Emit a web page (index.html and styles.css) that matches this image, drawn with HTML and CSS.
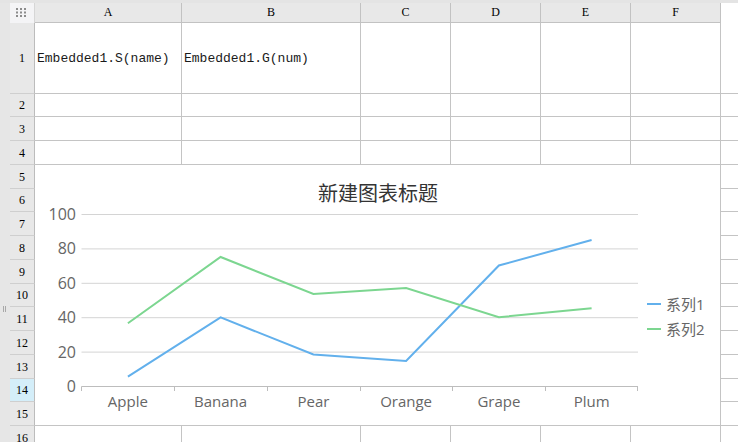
FILE: index.html
```html
<!DOCTYPE html>
<html>
<head>
<meta charset="utf-8">
<link rel="stylesheet" href="styles.css">
</head>
<body>
<div class="sheet">
  <div class="topstrip"></div>
  <div class="leftstrip"><span class="grip"></span></div>

  <div class="corner">
    <svg width="12" height="10" viewBox="0 0 12 10">
      <g fill="#8c8c8c">
        <rect x="0" y="0" width="2" height="2"/><rect x="4" y="0" width="2" height="2"/><rect x="8" y="0" width="2" height="2"/>
        <rect x="0" y="3.5" width="2" height="2"/><rect x="4" y="3.5" width="2" height="2"/><rect x="8" y="3.5" width="2" height="2"/>
        <rect x="0" y="7" width="2" height="2"/><rect x="4" y="7" width="2" height="2"/><rect x="8" y="7" width="2" height="2"/>
      </g>
    </svg>
  </div>
  <div class="h">A</div><div class="h">B</div><div class="h">C</div><div class="h">D</div><div class="h">E</div><div class="h">F</div><div class="hx"></div>

  <div class="rh">1</div><div class="c txt">Embedded1.S(name)</div><div class="c txt">Embedded1.G(num)</div><div class="c"></div><div class="c"></div><div class="c"></div><div class="c"></div><div class="x"></div>
  <div class="rh">2</div><div class="c"></div><div class="c"></div><div class="c"></div><div class="c"></div><div class="c"></div><div class="c"></div><div class="x"></div>
  <div class="rh">3</div><div class="c"></div><div class="c"></div><div class="c"></div><div class="c"></div><div class="c"></div><div class="c"></div><div class="x"></div>
  <div class="rh">4</div><div class="c"></div><div class="c"></div><div class="c"></div><div class="c"></div><div class="c"></div><div class="c"></div><div class="x"></div>

  <div class="chart">
    <svg width="685" height="260" viewBox="0 0 685 260">
      <text class="title" x="343" y="36" text-anchor="middle">新建图表标题</text>
      <g class="grid">
        <line x1="46.5" y1="49.5" x2="603" y2="49.5"/>
        <line x1="46.5" y1="83.9" x2="603" y2="83.9"/>
        <line x1="46.5" y1="118.3" x2="603" y2="118.3"/>
        <line x1="46.5" y1="152.7" x2="603" y2="152.7"/>
        <line x1="46.5" y1="187.1" x2="603" y2="187.1"/>
      </g>
      <g class="axis">
        <line x1="46.5" y1="221.5" x2="603" y2="221.5"/>
        <line x1="46.5" y1="221.5" x2="46.5" y2="226"/>
        <line x1="139.5" y1="221.5" x2="139.5" y2="226"/>
        <line x1="232.5" y1="221.5" x2="232.5" y2="226"/>
        <line x1="325.5" y1="221.5" x2="325.5" y2="226"/>
        <line x1="417.5" y1="221.5" x2="417.5" y2="226"/>
        <line x1="510.5" y1="221.5" x2="510.5" y2="226"/>
        <line x1="602.5" y1="221.5" x2="602.5" y2="226"/>
      </g>
      <g class="ylab" text-anchor="end">
        <text x="41" y="54.5">100</text>
        <text x="41" y="89">80</text>
        <text x="41" y="123.5">60</text>
        <text x="41" y="158">40</text>
        <text x="41" y="192.5">20</text>
        <text x="41" y="226.5">0</text>
      </g>
      <g class="xlab" text-anchor="middle">
        <text x="92.9" y="241.5">Apple</text>
        <text x="185.6" y="241.5">Banana</text>
        <text x="278.4" y="241.5">Pear</text>
        <text x="371.1" y="241.5">Orange</text>
        <text x="463.9" y="241.5">Grape</text>
        <text x="556.6" y="241.5">Plum</text>
      </g>
      <polyline class="s1" points="92.9,211.7 185.6,152.4 278.4,189.5 371.1,196 463.9,100.5 556.6,75"/>
      <polyline class="s2" points="92.9,158.3 185.6,92 278.4,129 371.1,123 463.9,152.2 556.6,143.3"/>
      <line class="s1" x1="612" y1="139" x2="626" y2="139"/>
      <line class="s2" x1="612" y1="164" x2="626" y2="164"/>
      <g class="leg">
        <text x="631" y="145">系列1</text>
        <text x="631" y="170">系列2</text>
      </g>
    </svg>
  </div>

  <div class="rh">5</div><div class="x"></div>
  <div class="rh">6</div><div class="x"></div>
  <div class="rh">7</div><div class="x"></div>
  <div class="rh">8</div><div class="x"></div>
  <div class="rh">9</div><div class="x"></div>
  <div class="rh">10</div><div class="x"></div>
  <div class="rh">11</div><div class="x"></div>
  <div class="rh">12</div><div class="x"></div>
  <div class="rh">13</div><div class="x"></div>
  <div class="rh sel">14</div><div class="x"></div>
  <div class="rh">15</div><div class="x"></div>

  <div class="rh">16</div><div class="c"></div><div class="c"></div><div class="c"></div><div class="c"></div><div class="c"></div><div class="c"></div><div class="x"></div>
</div>
</body>
</html>
```

FILE: styles.css
```css
html, body {
  margin: 0;
  padding: 0;
  background: #ffffff;
}
body {
  width: 738px;
  height: 442px;
  overflow: hidden;
}
.sheet {
  display: grid;
  grid-template-columns: 10px 25px 147px 179px 90px 90px 90px 90px 17px;
  grid-template-rows: 3px 20px 71px 23px 24px 24px 24px 23px 24px 24px 24px 23px 24px 24px 24px 23px 24px 24px;
  width: 738px;
  height: 466px;
  font-family: "Liberation Serif", serif;
}
.sheet > div {
  box-sizing: border-box;
}
.topstrip {
  grid-row: 1;
  grid-column: 1 / -1;
  background: #e4e4e4;
}
.leftstrip {
  grid-row: 2 / -1;
  grid-column: 1;
  background: #e6e6e6;
  padding-top: 303px;
  padding-left: 3px;
}
.grip {
  display: block;
  width: 1px;
  height: 6px;
  border-left: 1px solid #a8a8a8;
  border-right: 1px solid #a8a8a8;
}
.corner {
  background: #f4f4f6;
  border-right: 1px solid #d6d6d6;
  display: flex;
  align-items: center;
  justify-content: center;
  padding-right: 1px;
}
.corner svg {
  display: block;
  margin-left: 1px;
}
.h {
  background: #e8e8e8;
  border-right: 1px solid #c2c2c2;
  border-bottom: 1px solid #c2c2c2;
  display: flex;
  align-items: center;
  justify-content: center;
  font-size: 12px;
  color: #000;
  padding-bottom: 1px;
}
.hx {
  background: #ffffff;
}
.rh {
  background: #e8e8e8;
  border-right: 1px solid #bcbcbc;
  border-bottom: 1px solid #cfcfcf;
  display: flex;
  align-items: center;
  justify-content: center;
  font-size: 12px;
  color: #000;
  padding-top: 1px;
}
.rh.sel {
  background: #d4eef9;
}
.c {
  border-right: 1px solid #c4c4c4;
  border-bottom: 1px solid #c4c4c4;
  background: #fff;
}
.x {
  border-bottom: 1px solid #c4c4c4;
  background: #fff;
}
.txt {
  display: flex;
  align-items: center;
  padding-left: 2px;
  font-family: "Liberation Mono", monospace;
  font-size: 13px;
  color: #1a1a1a;
  white-space: nowrap;
  overflow: hidden;
}
.chart {
  grid-row: 7 / 18;
  grid-column: 3 / 9;
  background: #fff;
  border-right: 1px solid #c4c4c4;
  border-bottom: 1px solid #c4c4c4;
}
.chart svg {
  display: block;
  font-family: "Open Sans", "Noto Sans CJK SC", sans-serif;
}
.title {
  font-size: 20px;
  fill: #333;
}
.grid line {
  stroke: #d4d4d4;
  stroke-width: 1;
}
.axis line {
  stroke: #bdbdbd;
  stroke-width: 1;
}
.ylab text {
  font-size: 16px;
  fill: #666;
}
.xlab text {
  font-size: 15px;
  fill: #666;
}
.leg text {
  font-size: 15px;
  fill: #666;
}
.s1 {
  fill: none;
  stroke: #62b0ec;
  stroke-width: 2;
}
.s2 {
  fill: none;
  stroke: #7cd690;
  stroke-width: 2;
}
```
